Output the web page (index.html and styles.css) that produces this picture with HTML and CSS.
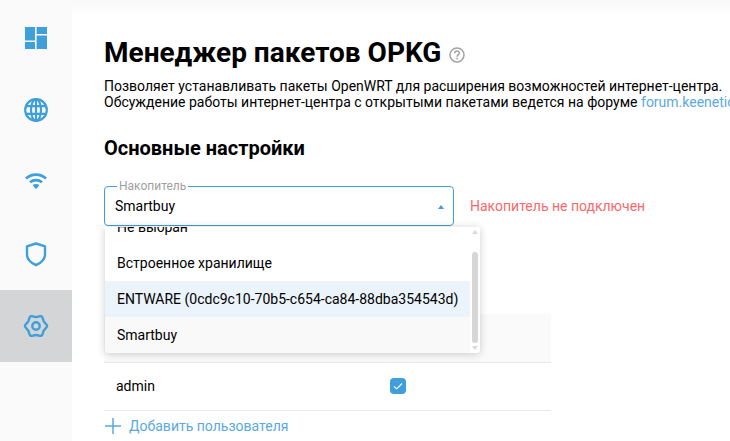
FILE: index.html
```html
<!DOCTYPE html>
<html lang="ru">
<head>
<meta charset="utf-8">
<title>Менеджер пакетов OPKG</title>
<link rel="stylesheet" href="styles.css">
</head>
<body>
<div class="app">
  <nav class="sidebar">
    <div class="nav-item">
      <svg width="24" height="24" viewBox="0 0 24 24"><path class="fill" d="M1 1h10v13.600H1zM12.600 1H23v7H12.600zM1 16h10v7H1zM12.600 9.600H23V23H12.600z"/></svg>
    </div>
    <div class="nav-item">
      <svg width="26" height="26" viewBox="0 0 26 26" class="line globe"><circle cx="13" cy="13" r="10.800"/><ellipse cx="13" cy="13" rx="5" ry="10.800"/><path d="M3 9.200h20M3 16.800h20M13 2v22"/></svg>
    </div>
    <div class="nav-item">
      <svg width="24" height="24" viewBox="0 0 24 24" class="line wifi"><path d="M2 8.500C7.500 3.200 16.500 3.200 22 8.500"/><path d="M6 12.200c3.500-2.900 8.500-2.900 12 0"/><path class="fill" d="M8.500 15c2.200-1.300 4.800-1.300 7 0L12 19.200z"/></svg>
    </div>
    <div class="nav-item">
      <svg width="24" height="26" viewBox="0 0 24 26" class="line wide"><path d="M12 2.500l9 2.800v8.700c0 4.500-4 7.800-9 10.200-5-2.400-9-5.700-9-10.200V5.300z" stroke-linejoin="round"/></svg>
    </div>
    <div class="nav-item active">
      <svg width="26" height="26" viewBox="0 0 26 26" class="line wide"><circle cx="13" cy="13" r="3.700"/><path d="M22.840 15.100Q25.400 13 22.840 10.900Q20.270 8.800 19.740 5.530Q19.200 2.260 16.100 3.430Q13 4.600 9.900 3.430Q6.800 2.260 6.270 5.530Q5.730 8.800 3.170 10.900Q.6 13 3.170 15.100Q5.730 17.200 6.270 20.470Q6.800 23.740 9.900 22.570Q13 21.400 16.100 22.570Q19.200 23.740 19.740 20.470Q20.270 17.200 22.840 15.100Z"/></svg>
    </div>
  </nav>
  <main class="content">
    <header class="title-row">
      <h1 class="title">Менеджер пакетов OPKG</h1>
      <svg class="help" width="16" height="16" viewBox="0 0 16 16"><circle cx="8" cy="8" r="7"/><path d="M5.700 6.300c0-3.100 4.700-3.100 4.700-.2 0 1.800-2.400 1.800-2.400 3.700"/><path d="M8 10.800v1.600"/></svg>
    </header>
    <p class="desc">Позволяет устанавливать пакеты OpenWRT для расширения возможностей интернет-центра.<br>Обсуждение работы интернет-центра с открытыми пакетами ведется на форуме <a class="link">forum.keenetic.com</a></p>
    <h2 class="section">Основные настройки</h2>
    <div class="field-row">
      <div class="select">
        <span class="select-label">Накопитель</span>
        <span class="select-value">Smartbuy</span>
        <span class="caret"></span>
        <div class="dropdown">
          <ul class="options">
            <li class="option">Не выбран</li>
            <li class="option">Встроенное хранилище</li>
            <li class="option hover">ENTWARE (0cdc9c10-70b5-c654-ca84-88dba354543d)</li>
            <li class="option current">Smartbuy</li>
          </ul>
          <div class="scrollbar">
            <span class="arrow up"></span>
            <span class="track"><span class="thumb"></span></span>
            <span class="arrow down"></span>
          </div>
        </div>
      </div>
      <span class="error">Накопитель не подключен</span>
    </div>
    <div class="table">
      <div class="thead"></div>
      <div class="row">
        <span class="user">admin</span>
        <span class="check"><svg width="12" height="12" viewBox="0 0 12 12"><path d="M2 6.500l2.800 2.300L10 3.500"/></svg></span>
      </div>
    </div>
    <div class="add">
      <svg width="16" height="16" viewBox="0 0 16 16"><path d="M8 0v16M0 8h16"/></svg>
      <span>Добавить пользователя</span>
    </div>
  </main>
</div>
</body>
</html>
```
FILE: styles.css
```css
* { box-sizing: border-box; }
html, body { margin: 0; padding: 0; height: 100%; overflow: hidden; background: #fff; }
body { font-family: Roboto, "Liberation Sans", sans-serif; color: #000; font-size: 14px; }
.app { display: flex; height: 441px; }
.sidebar { width: 72px; flex: none; background: #fafafa; padding-top: 2px; }
.nav-item { height: 72px; display: flex; align-items: center; justify-content: center; }
.nav-item.active { background: #d4d5d7; }
.fill { fill: #3f9fdb; }
.line { fill: none; stroke: #3f9fdb; stroke-width: 2; }
.line.wide { stroke-width: 2.400; }
.line.globe { stroke-width: 2.200; }
.line.wifi { stroke-width: 2.700; }
.line .fill { stroke: none; }
.content { flex: 1; min-width: 0; padding: 35px 0 0 32px; background: linear-gradient(#f7f7f7, #fff 14px); white-space: nowrap; }
.title-row { display: flex; align-items: center; height: 36px; }
.title { margin: 0; font-size: 28px; line-height: 36px; font-weight: 700; }
.help { margin-left: 8px; margin-top: 3px; fill: none; stroke: #a3a3a3; stroke-width: 1.500; }
.desc { margin: 7px 0 0; line-height: 16px; font-size: 14px; }
.link { color: #5aa9e0; }
.section { margin: 26px 0 0; font-size: 20px; line-height: 24px; font-weight: 700; }
.field-row { display: flex; align-items: center; margin-top: 26px; }
.select { position: relative; width: 350px; height: 40px; border: 1px solid #3f9fdb; border-radius: 4px; padding: 0 10px; display: flex; align-items: center; }
.select-label { position: absolute; left: 12px; top: -8px; padding: 0 2px; background: #fff; color: #a0a0a0; font-size: 12px; line-height: 14px; }
.select-value { font-size: 14px; }
.caret { position: absolute; right: 9px; top: 18px; border: 3.500px solid transparent; border-top: 0; border-bottom: 4px solid #3f9fdb; }
.error { margin-left: 16px; color: #f8696b; font-size: 14px; }
.dropdown { position: absolute; z-index: 2; left: 0; top: 40px; width: 375px; height: 126px; display: flex; background: #fff; border-radius: 0 0 4px 4px; box-shadow: 0 1px 8px rgba(0, 0, 0, .2); overflow: hidden; }
.options { list-style: none; margin: -18px 0 0; padding: 0; flex: 1; }
.option { height: 36px; line-height: 36px; padding: 0 12px; font-size: 14px; }
.option.hover { background: #ebf3fb; }
.option.current { background: #f9f9f9; }
.scrollbar { width: 10px; flex: none; background: #fff; display: flex; flex-direction: column; align-items: center; }
.arrow { flex: none; width: 0; height: 0; border: 3px solid transparent; }
.arrow.up { border-bottom: 4px solid #d8d8d8; border-top: 0; margin: 3px 0 2px; }
.arrow.down { border-top: 4px solid #d8d8d8; border-bottom: 0; margin: 3px 0 3px; }
.track { flex: 1; width: 6px; padding-top: 16px; }
.thumb { display: block; height: 100%; background: #d6d6d6; border-radius: 3px; }
.table { margin-top: 88px; width: 447px; }
.thead { height: 49px; background: #fafafa; border-bottom: 1px solid #e8e8e8; }
.row { height: 48px; border-bottom: 1px solid #e8e8e8; display: flex; align-items: center; padding: 0 0 2px 12px; }
.user { width: 274px; font-size: 14px; }
.check { width: 16px; height: 16px; background: #3f9fdb; border-radius: 4px; display: flex; align-items: center; justify-content: center; }
.check svg { fill: none; stroke: #fff; stroke-width: 1.100; }
.add { display: flex; align-items: center; gap: 8px; margin: 7px 0 0 1px; color: #5aa9e0; font-size: 14px; line-height: 16px; }
.add svg { stroke: #5aa9e0; stroke-width: 1.500; fill: none; }
```
